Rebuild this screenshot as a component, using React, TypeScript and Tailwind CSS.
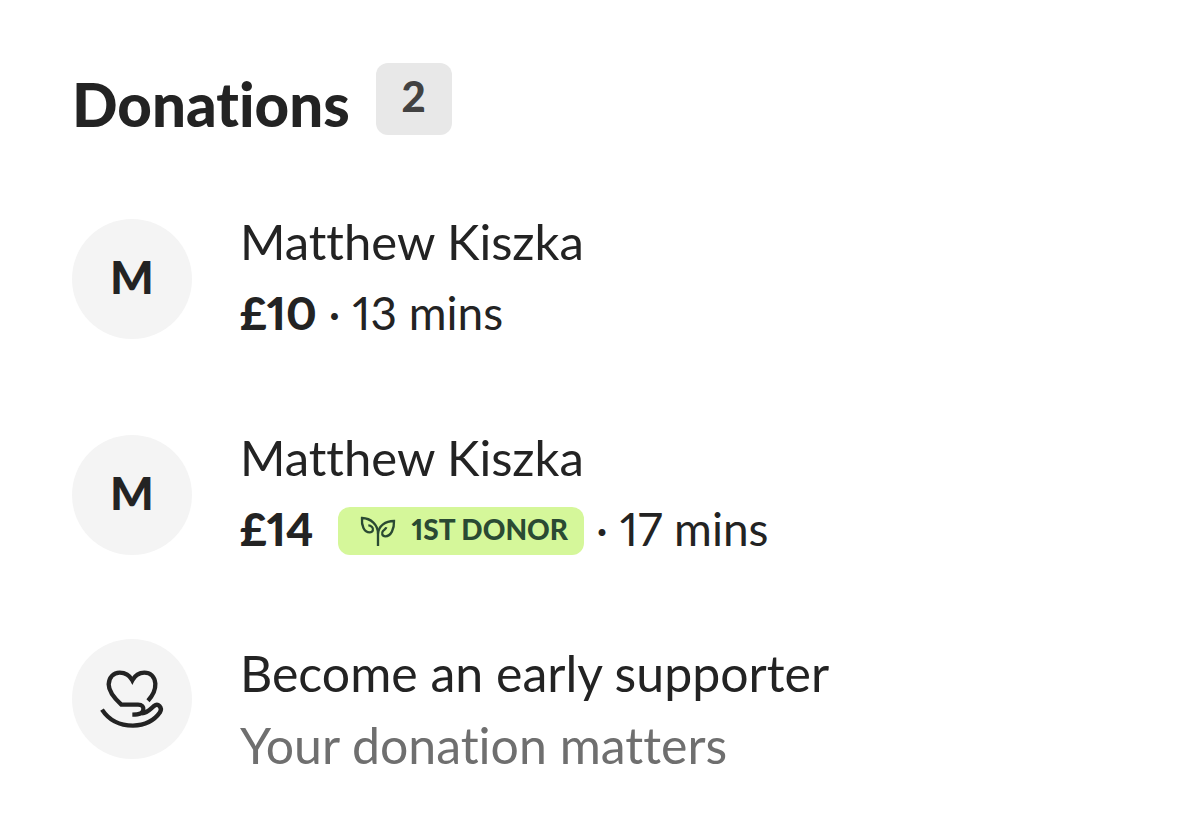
import React from "react";

interface RowProps {
  avatar: React.ReactNode;
  title: string;
  align?: "center" | "start";
  children: React.ReactNode;
}

const HeartHandIcon = () => (
  <svg
    className="size-[72px]"
    viewBox="108 99 216 216"
    fill="none"
    stroke="currentColor"
    strokeWidth="13"
    aria-hidden="true"
  >
    <path d="M264 212C280 195 287 182 286 161C284 139 270 128 253 128C236 128 224 138 217 151C210 138 196 128 179 128C160 128 147 142 146 163C146 185 164 206 184 224H234C247 224 251 231 250 239C248 250 240 254 217 254" />
    <path d="M126 239C145 268 178 287 219 287C257 286 284 270 300 247C308 232 294 218 282 228C270 238 262 249 246 250" />
  </svg>
);

const SproutIcon = () => (
  <svg
    className="size-10"
    viewBox="84 45 120 120"
    fill="none"
    stroke="currentColor"
    strokeWidth="7"
    aria-hidden="true"
  >
    <path d="M144 150V113C144 86 123 67 96 66C94 88 102 109 119 109C129 109 132 99 126 93C123 90 119 88 115 88" />
    <path d="M144 113C146 89 166 75 192 75C193 99 183 121 166 121C156 121 154 111 159 105C163 101 168 99 169 94" />
  </svg>
);

const Row: React.FC<RowProps> = ({
  avatar,
  title,
  align = "center",
  children,
}) => {
  return (
    <li className="flex items-start gap-12">
      <div
        className={`flex size-[120px] shrink-0 items-center justify-center rounded-full bg-[#f4f4f4] text-[46px] leading-none font-black ${
          align === "center" ? "mt-3.5 pb-1" : "mt-0.5"
        }`}
      >
        {avatar}
      </div>
      <div
        className={
          align === "center"
            ? "text-[49px] leading-[72px]"
            : "text-[50px] leading-[72px]"
        }
      >
        <div>{title}</div>
        {children}
      </div>
    </li>
  );
};

export default function App() {
  return (
    <main className="min-h-screen bg-white px-[72px] pt-[63px] pb-12 font-['Lato',sans-serif] text-[#232323] proportional-nums [font-variant-ligatures:none]">
      <div className="mb-[70px] flex h-[72px] gap-[26px]">
        <h2 className="text-[60px] leading-[82px] font-black">Donations</h2>
        <span className="flex h-[72px] w-[76px] justify-center rounded-xl bg-[#e8e8e8] text-[42px] leading-[66px] font-black text-[#424242]">
          2
        </span>
      </div>

      <ul className="flex flex-col gap-[72px]">
        <Row avatar="M" title="Matthew Kiszka">
          <div className="text-[46px]">
            <strong className="font-black">£10</strong> · 13 mins
          </div>
        </Row>

        <Row avatar="M" title="Matthew Kiszka">
          <div className="flex items-center text-[46px]">
            <strong className="font-black">£14</strong>
            <span className="mt-1 mr-3 ml-6 flex h-12 items-center gap-3.5 rounded-xl bg-[#d5f79a] pr-4 pl-5 text-[28px] leading-[44px] font-black text-[#2a4a33]">
              <SproutIcon />
              <span className="pb-1">1ST DONOR</span>
            </span>
            <span>· 17 mins</span>
          </div>
        </Row>

        <Row avatar={<HeartHandIcon />} title="Become an early supporter" align="start">
          <div className="text-[#6f6f6f]">Your donation matters</div>
        </Row>
      </ul>
    </main>
  );
}
